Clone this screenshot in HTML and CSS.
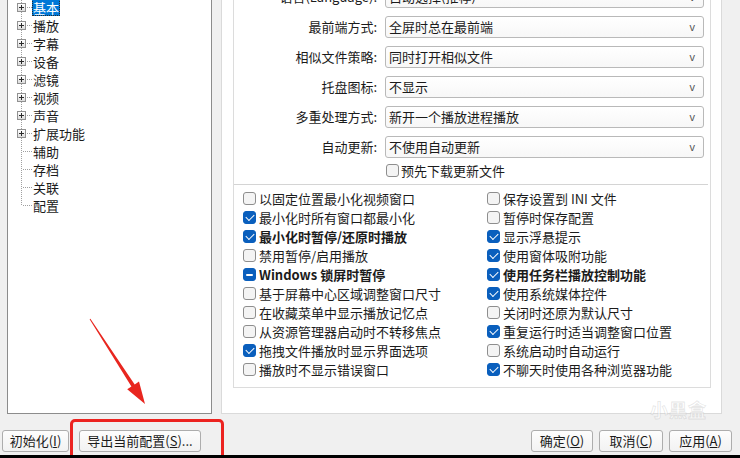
FILE: index.html
```html
<!DOCTYPE html>
<html lang="zh-CN">
<head>
<meta charset="utf-8">
<title>选项</title>
<link rel="stylesheet" href="styles.css">
</head>
<body>
<div class="dialog">
  <div class="main">
    <div class="tree">
      <ul class="tree-list">
        <li class="node"><span class="exp"></span><span class="conn"></span><span class="label selected">基本</span></li>
        <li class="node"><span class="exp"></span><span class="conn"></span><span class="label">播放</span></li>
        <li class="node"><span class="exp"></span><span class="conn"></span><span class="label">字幕</span></li>
        <li class="node"><span class="exp"></span><span class="conn"></span><span class="label">设备</span></li>
        <li class="node"><span class="exp"></span><span class="conn"></span><span class="label">滤镜</span></li>
        <li class="node"><span class="exp"></span><span class="conn"></span><span class="label">视频</span></li>
        <li class="node"><span class="exp"></span><span class="conn"></span><span class="label">声音</span></li>
        <li class="node"><span class="exp"></span><span class="conn"></span><span class="label">扩展功能</span></li>
        <li class="node leaf"><span class="label">辅助</span></li>
        <li class="node leaf"><span class="label">存档</span></li>
        <li class="node leaf"><span class="label">关联</span></li>
        <li class="node leaf last"><span class="label">配置</span></li>
      </ul>
    </div>
    <div class="page">
      <div class="group">
        <div class="form">
          <span class="flabel">语言(Language):</span>
          <div class="select"><span>自动选择(推荐)</span><span class="arrow">v</span></div>
          <span class="flabel">最前端方式:</span>
          <div class="select"><span>全屏时总在最前端</span><span class="arrow">v</span></div>
          <span class="flabel">相似文件策略:</span>
          <div class="select"><span>同时打开相似文件</span><span class="arrow">v</span></div>
          <span class="flabel">托盘图标:</span>
          <div class="select"><span>不显示</span><span class="arrow">v</span></div>
          <span class="flabel">多重处理方式:</span>
          <div class="select"><span>新开一个播放进程播放</span><span class="arrow">v</span></div>
          <span class="flabel">自动更新:</span>
          <div class="select"><span>不使用自动更新</span><span class="arrow">v</span></div>
          <label class="check pre"><span class="box"></span>预先下载更新文件</label>
        </div>
        <div class="checks">
          <label class="check"><span class="box"></span>以固定位置最小化视频窗口</label>
          <label class="check"><span class="box"></span>保存设置到 INI 文件</label>
          <label class="check"><span class="box on"></span>最小化时所有窗口都最小化</label>
          <label class="check"><span class="box"></span>暂停时保存配置</label>
          <label class="check bold"><span class="box on"></span>最小化时暂停/还原时播放</label>
          <label class="check"><span class="box on"></span>显示浮悬提示</label>
          <label class="check"><span class="box"></span>禁用暂停/启用播放</label>
          <label class="check"><span class="box on"></span>使用窗体吸附功能</label>
          <label class="check bold"><span class="box mixed"></span>Windows 锁屏时暂停</label>
          <label class="check bold"><span class="box on"></span>使用任务栏播放控制功能</label>
          <label class="check"><span class="box"></span>基于屏幕中心区域调整窗口尺寸</label>
          <label class="check"><span class="box on"></span>使用系统媒体控件</label>
          <label class="check"><span class="box"></span>在收藏菜单中显示播放记忆点</label>
          <label class="check"><span class="box"></span>关闭时还原为默认尺寸</label>
          <label class="check"><span class="box"></span>从资源管理器启动时不转移焦点</label>
          <label class="check"><span class="box on"></span>重复运行时适当调整窗口位置</label>
          <label class="check"><span class="box on"></span>拖拽文件播放时显示界面选项</label>
          <label class="check"><span class="box"></span>系统启动时自动运行</label>
          <label class="check"><span class="box"></span>播放时不显示错误窗口</label>
          <label class="check"><span class="box on"></span>不聊天时使用各种浏览器功能</label>
        </div>
      </div>
    </div>
  </div>
  <div class="footer">
    <div class="btns">
      <button class="btn w-init">初始化(<u>I</u>)</button>
      <button class="btn w-export">导出当前配置(<u>S</u>)...</button>
    </div>
    <div class="btns right">
      <button class="btn w-ok">确定(<u>O</u>)</button>
      <button class="btn w-cancel">取消(<u>C</u>)</button>
      <button class="btn w-apply">应用(<u>A</u>)</button>
    </div>
  </div>
  <div class="watermark">小黑盒</div>
  <div class="mark-box"></div>
  <svg class="mark-arrow" width="740" height="458" viewBox="0 0 740 458">
    <polygon points="90.4,318.7 134.7,384.4 139,381.6 145,404 127.2,389.3 131.4,386.6 89.6,319.3" fill="#e8261f"/>
  </svg>
</div>
</body>
</html>
```
FILE: styles.css
```css
* { box-sizing: border-box; }
html, body { margin: 0; padding: 0; }
body {
  width: 740px;
  height: 458px;
  overflow: hidden;
  background: #000;
  font-family: "Noto Sans CJK SC", "Noto Sans", sans-serif;
  font-size: 13px;
  color: #1b1b1b;
}
.dialog {
  position: relative;
  width: 740px;
  height: 455px;
  overflow: hidden;
  background: #f0f0f0;
  display: flex;
  flex-direction: column;
}
.main {
  display: flex;
  gap: 9px;
  margin-top: -20px;
  padding-left: 7px;
  height: 434px;
  flex: none;
}

/* tree */
.tree {
  width: 205px;
  background: #fff;
  border: 1px solid #8c8c8c;
  padding-top: 17px;
}
.tree-list { list-style: none; margin: 0; padding: 0; }
.node {
  height: 18px;
  display: flex;
  align-items: center;
  padding-left: 9px;
  background-image: repeating-linear-gradient(to bottom, #a0a0a0 0 1px, transparent 1px 2px);
  background-size: 1px 100%;
  background-position: 13px 0;
  background-repeat: no-repeat;
}
.node.leaf {
  padding-left: 24px;
  background-image:
    repeating-linear-gradient(to bottom, #a0a0a0 0 1px, transparent 1px 2px),
    repeating-linear-gradient(to right, #a0a0a0 0 1px, transparent 1px 2px);
  background-size: 1px 100%, 10px 1px;
  background-position: 13px 0, 15px 9px;
}
.node.leaf.last { background-size: 1px 9px, 10px 1px; }
.exp {
  width: 9px;
  height: 9px;
  flex: none;
  border: 1px solid #919191;
  background:
    linear-gradient(#2b2b2b, #2b2b2b) center / 5px 1px no-repeat,
    linear-gradient(#2b2b2b, #2b2b2b) center / 1px 5px no-repeat,
    linear-gradient(#ffffff, #dcdcdc);
}
.conn {
  width: 6px;
  height: 1px;
  flex: none;
  background: repeating-linear-gradient(to right, transparent 0 1px, #a0a0a0 1px 2px);
}
.label {
  line-height: 17px;
  height: 17px;
  padding: 0 1px;
  white-space: nowrap;
}
.label.selected {
  background: #0078d7;
  color: #fff;
  outline: 1px dotted #2a2a2a;
  outline-offset: -1px;
}

/* right page */
.page {
  width: 501px;
  background: #fff;
  border: 1px solid #dadada;
  padding: 0 10px 25px 11px;
  display: flex;
  flex-direction: column;
}
.group {
  flex: 1;
  border: 1px solid #dcdcdc;
  display: flex;
  flex-direction: column;
}
.form {
  display: grid;
  grid-template-columns: 146px 319px;
  column-gap: 5px;
  row-gap: 8px;
  padding: 4px 0 4px 0;
}
.flabel {
  text-align: right;
  line-height: 22px;
  padding-right: 3px;
  white-space: nowrap;
}
.select {
  height: 22px;
  border: 1px solid #b9b9b9;
  border-radius: 3px;
  background: linear-gradient(#ffffff, #f7f7f7);
  display: flex;
  align-items: center;
  justify-content: space-between;
  padding: 0 8px 0 3px;
  line-height: 20px;
  white-space: nowrap;
}
.select .arrow {
  font-family: "Liberation Sans", sans-serif;
  font-size: 11px;
  color: #555;
}
.checks {
  border-top: 1px solid #d4d4d4;
  margin-right: 2px;
  display: grid;
  grid-template-columns: 244px 1fr;
  grid-auto-rows: 19px;
  padding: 4px 0 8px 9px;
}
.check {
  display: flex;
  align-items: center;
  gap: 3px;
  height: 19px;
  white-space: nowrap;
  line-height: 19px;
}
.check.bold { font-weight: bold; }
.form .check.pre {
  grid-column: 2;
  margin-top: -5px;
  padding-left: 1px;
  gap: 2px;
}
.box {
  width: 13px;
  height: 13px;
  flex: none;
  border: 1px solid #8e8e8e;
  border-radius: 3px;
  background: #f4f4f4;
  display: flex;
  align-items: center;
  justify-content: center;
}
.box.on, .box.mixed {
  background: #0a5fbd;
  border-color: #0a5fbd;
}
.box.on::after {
  content: "";
  width: 7px;
  height: 4px;
  border-left: 1.5px solid #fff;
  border-bottom: 1.5px solid #fff;
  transform: translateY(-1px) rotate(-45deg);
}
.box.mixed::after {
  content: "";
  width: 7px;
  height: 2px;
  background: #fff;
  border-radius: 1px;
}

/* footer */
.footer {
  flex: 1;
  display: flex;
  justify-content: space-between;
  align-items: flex-start;
  padding: 16px 8px 0 2px;
}
.btns { display: flex; gap: 10px; }
.btns.right { gap: 6px; }
.btn {
  height: 22px;
  border: 1px solid #adadad;
  border-radius: 3px;
  background: linear-gradient(#fdfdfd, #f2f2f2);
  font-family: inherit;
  font-size: 13px;
  color: #1b1b1b;
  padding: 0;
  line-height: 20px;
  white-space: nowrap;
}
.w-init { width: 67px; }
.w-export { width: 122px; }
.w-ok { width: 62px; }
.w-cancel { width: 64px; }
.w-apply { width: 63px; }

/* overlays */
.mark-box {
  position: absolute;
  left: 70px;
  top: 419px;
  width: 154px;
  height: 50px;
  border: 3px solid #ec2320;
  border-radius: 5px;
}
.mark-arrow {
  position: absolute;
  left: 0;
  top: 0;
  pointer-events: none;
}
.watermark {
  position: absolute;
  left: 650px;
  top: 398px;
  font-size: 18px;
  line-height: 22px;
  font-weight: bold;
  color: rgba(255, 255, 255, 0.5);
  -webkit-text-stroke: 0.8px rgba(170, 170, 170, 0.3);
  letter-spacing: 1px;
}
```
